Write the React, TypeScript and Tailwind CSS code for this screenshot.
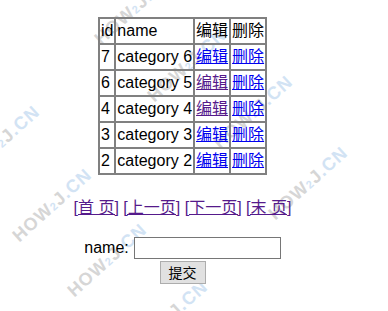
import React from "react";

const rows = [
  { id: 7, name: "category 6", editVisited: false },
  { id: 6, name: "category 5", editVisited: true },
  { id: 4, name: "category 4", editVisited: true },
  { id: 3, name: "category 3", editVisited: false },
  { id: 2, name: "category 2", editVisited: false },
];

const cell = "border border-[#808080] p-px text-left font-normal whitespace-nowrap";
const link = "underline text-[#0000ee]";
const visited = "underline text-[#551a8b]";

function Watermark({ className }: { className: string }) {
  return (
    <span
      className={
        "absolute -translate-x-1/2 -translate-y-1/2 -rotate-[42deg] whitespace-nowrap text-[18px] font-bold tracking-[1px] leading-none select-none " +
        className
      }
    >
      <span className="text-[#d6d6d6]">HOW</span>
      <span className="text-[11px] text-[#d2e3f4]">2</span>
      <span className="text-[#d6d6d6]">J</span>
      <span className="text-[#d2e3f4]">.CN</span>
    </span>
  );
}

export default function App() {
  return (
    <div className="relative w-[388px] h-[311px] overflow-hidden bg-white font-['Liberation_Sans','Noto_Sans_CJK_SC',sans-serif]">
      {/* background watermark */}
      <Watermark className="left-[52px] top-[205px]" />
      <Watermark className="left-[107px] top-[260px]" />
      <Watermark className="left-[168px] top-[317px]" />
      <Watermark className="left-[0px] top-[142px]" />
      <Watermark className="left-[134px] top-[8px]" />
      <Watermark className="left-[187px] top-[65px]" />
      <Watermark className="left-[253px] top-[112px]" />
      <Watermark className="left-[308px] top-[183px]" />

      <div className="relative w-[365px] pt-[17px] flex flex-col items-center text-[16px] leading-[22px] text-black">
        <table className="border-separate border-spacing-0 border border-[#808080]">
          <thead>
            <tr>
              <th className={cell}>id</th>
              <th className={cell}>name</th>
              <th className={cell}>编辑</th>
              <th className={cell}>删除</th>
            </tr>
          </thead>
          <tbody>
            {rows.map((r) => (
              <tr key={r.id}>
                <td className={cell}>{r.id}</td>
                <td className={cell}>{r.name}</td>
                <td className={cell}>
                  <a href="#" className={r.editVisited ? visited : link}>
                    编辑
                  </a>
                </td>
                <td className={cell}>
                  <a href="#" className={link}>
                    删除
                  </a>
                </td>
              </tr>
            ))}
          </tbody>
        </table>

        <div className="mt-[22px] whitespace-pre">
          <a href="#" className={visited}>[首 页]</a>{" "}
          <a href="#" className={visited}>[上一页]</a>{" "}
          <a href="#" className={visited}>[下一页]</a>{" "}
          <a href="#" className={visited}>[末 页]</a>
        </div>

        <div className="mt-[18px] flex items-center gap-[5px]">
          <span>name:</span>
          <input type="text" className="w-[147px] h-[22px] border border-[#767676] bg-white px-1 text-[13px]" />
        </div>
        <button className="mt-[2px] w-[46px] h-[23px] border border-[#adadad] bg-[#e1e1e1] text-[14px] leading-none">
          提交
        </button>
      </div>
    </div>
  );
}
